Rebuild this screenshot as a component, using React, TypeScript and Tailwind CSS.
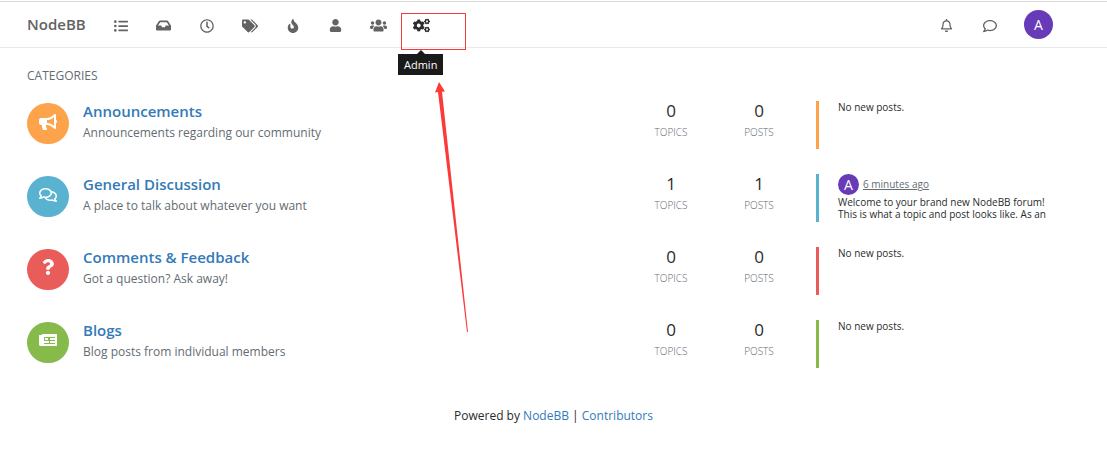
import type { IconType } from "react-icons";
import {
  FaBullhorn,
  FaCogs,
  FaFire,
  FaInbox,
  FaListUl,
  FaQuestion,
  FaRegBell,
  FaRegClock,
  FaRegComment,
  FaRegComments,
  FaTags,
  FaUser,
  FaUsers,
} from "react-icons/fa";

type Category = {
  name: string;
  description: string;
  icon: IconType | typeof Newspaper;
  iconSize: number;
  circle: string;
  bar: string;
  topics: number;
  posts: number;
  teaser?: { time: string; text: string };
};

const navItems: { label: string; icon: IconType; size: number }[] = [
  { label: "Categories", icon: FaListUl, size: 14 },
  { label: "Unread", icon: FaInbox, size: 15 },
  { label: "Recent", icon: FaRegClock, size: 14 },
  { label: "Tags", icon: FaTags, size: 16 },
  { label: "Popular", icon: FaFire, size: 14 },
  { label: "Users", icon: FaUser, size: 13 },
  { label: "Groups", icon: FaUsers, size: 17 },
];

const categories: Category[] = [
  {
    name: "Announcements",
    description: "Announcements regarding our community",
    icon: FaBullhorn,
    iconSize: 18,
    circle: "bg-[#fda34b]",
    bar: "border-[#fda34b]",
    topics: 0,
    posts: 0,
  },
  {
    name: "General Discussion",
    description: "A place to talk about whatever you want",
    icon: FaRegComments,
    iconSize: 18,
    circle: "bg-[#59b3d0]",
    bar: "border-[#59b3d0]",
    topics: 1,
    posts: 1,
    teaser: {
      time: "6 minutes ago",
      text: "Welcome to your brand new NodeBB forum! This is what a topic and post looks like. As an",
    },
  },
  {
    name: "Comments & Feedback",
    description: "Got a question? Ask away!",
    icon: FaQuestion,
    iconSize: 16,
    circle: "bg-[#e95c5a]",
    bar: "border-[#e95c5a]",
    topics: 0,
    posts: 0,
  },
  {
    name: "Blogs",
    description: "Blog posts from individual members",
    icon: Newspaper,
    iconSize: 18,
    circle: "bg-[#86ba4b]",
    bar: "border-[#86ba4b]",
    topics: 0,
    posts: 0,
  },
];

function Newspaper({ size }: { size: number }) {
  return (
    <svg width={size} height={size} viewBox="0 0 18 18" fill="currentColor">
      <path
        fillRule="evenodd"
        d="M3 2H17.3Q18 2 18 2.7V13.3Q18 14 17.3 14H1.5Q0 14 0 12.5V3.5Q0 3 .5 3H3ZM5 5H16V6H11V8H16V9H11V11H16V12H5V11H10V9H5ZM6 6V8H9V6Z"
      />
    </svg>
  );
}

function Navbar() {
  return (
    <header className="border-y border-t-[#dadada] border-b-[#eaeaea]">
      <nav className="flex h-[45px] items-center pr-[54px] pl-[27px] text-[#636363]">
        <a href="#" className="w-[72px] text-[15px] font-semibold">
          NodeBB
        </a>

        {navItems.map(({ label, icon: Icon, size }) => (
          <a
            key={label}
            href="#"
            aria-label={label}
            className="flex w-[43px] justify-center pt-[2px]"
          >
            <Icon size={size} />
          </a>
        ))}

        {/* admin link with its tooltip open */}
        <div className="relative">
          <a
            href="#"
            aria-label="Admin"
            className="flex w-[43px] justify-center pt-[2px] text-[#2b2b2b]"
          >
            <FaCogs size={17} />
          </a>
          <div className="absolute top-[-2px] left-[1px] h-[37px] w-[65px] border border-[#f53b3b]" />
          <div className="absolute top-[35px] left-[-2px] flex flex-col items-center">
            <div className="border-x-4 border-b-4 border-x-transparent border-b-[#1a1a1a]" />
            <div
              role="tooltip"
              className="bg-[#1a1a1a] px-[6px] text-[11px] leading-[21px] text-white"
            >
              Admin
            </div>
          </div>
          <Arrow />
        </div>

        {/* right side */}
        <div className="ml-auto flex items-center">
          <button
            aria-label="Notifications"
            className="flex w-[43px] justify-center pt-[2px]"
          >
            <FaRegBell size={13} />
          </button>
          <button aria-label="Chats" className="flex w-[43px] justify-center pt-[2px]">
            <FaRegComment size={14} />
          </button>
          <button className="ml-[13px] size-[29px] rounded-full bg-[#673ab7] text-sm text-white">
            A
          </button>
        </div>
      </nav>
    </header>
  );
}

function Arrow() {
  return (
    <svg
      className="pointer-events-none absolute top-[67px] left-[33px]"
      width="36"
      height="252"
      viewBox="0 0 36 252"
      fill="#fb3a3a"
    >
      <path d="M6 0 L12 9.5 L9 9.8 L35 250 L34 250 L5 10 L2 10.5 Z" />
    </svg>
  );
}

function Stat({ value, label }: { value: number; label: string }) {
  return (
    <div className="w-[88px] text-center">
      <div className="text-[17px] leading-5">{value}</div>
      <div className="text-[10px] leading-[22px] font-light text-[#636c72] uppercase">
        {label}
      </div>
    </div>
  );
}

function CategoryRow({ category }: { category: Category }) {
  const { icon: Icon, iconSize, teaser } = category;
  return (
    <li className="flex h-[73px] items-start">
      <div
        className={`mt-[2px] flex h-[41px] w-[42px] justify-center rounded-full pt-[10px] text-white ${category.circle}`}
      >
        <Icon size={iconSize} />
      </div>

      <div className="ml-[14px] flex-1">
        <h2 className="text-[15px] leading-5 font-semibold text-[#337ab7]">
          <a href="#">{category.name}</a>
        </h2>
        <p className="text-xs leading-6 text-[#636c72]">{category.description}</p>
      </div>

      <Stat value={category.topics} label="Topics" />
      <Stat value={category.posts} label="Posts" />

      <div
        className={`ml-[13px] h-12 w-[237px] border-l-3 pl-[19px] text-[10px] leading-3 ${category.bar}`}
      >
        {teaser ? (
          <>
            <div className="flex items-start gap-1">
              <span className="size-[21px] rounded-full bg-[#673ab7] text-center text-sm leading-[21px] text-white">
                A
              </span>
              <a href="#" className="leading-5 text-[#636c72] underline">
                {teaser.time}
              </a>
            </div>
            <p className="mt-px">{teaser.text}</p>
          </>
        ) : (
          <p>No new posts.</p>
        )}
      </div>
    </li>
  );
}

export default function App() {
  return (
    <div className="bg-white pt-px font-['Open_Sans',sans-serif] text-[#292b2c]">
      <Navbar />

      <main className="pt-[18px] pr-[54px] pl-[27px]">
        <h1 className="text-xs leading-5 text-[#636c72]">CATEGORIES</h1>
        <ul className="mt-[15px]">
          {categories.map((category) => (
            <CategoryRow key={category.name} category={category} />
          ))}
        </ul>
      </main>

      <footer className="mt-[13px] text-center text-xs leading-5">
        Powered by{" "}
        <a href="#" className="text-[#337ab7]">
          NodeBB
        </a>{" "}
        |{" "}
        <a href="#" className="text-[#337ab7]">
          Contributors
        </a>
      </footer>
    </div>
  );
}
